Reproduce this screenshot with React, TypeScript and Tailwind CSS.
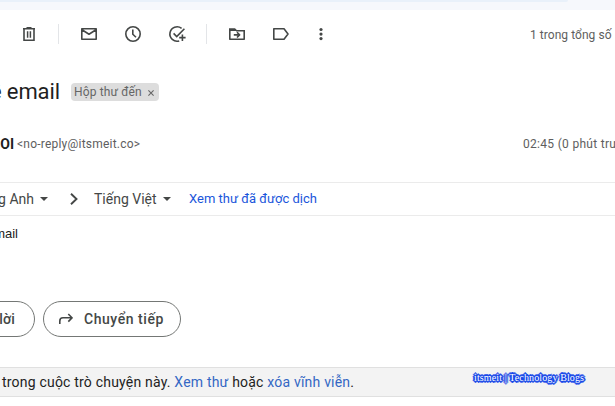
import React from 'react';

function Icon({ children, className = '' }: { children: React.ReactNode; className?: string }) {
  return (
    <svg viewBox="0 0 20 20" className={`h-5 w-5 shrink-0 ${className}`} fill="none" stroke="#444746" strokeWidth="1.6">
      {children}
    </svg>
  );
}

function Toolbar() {
  return (
    <div className="flex h-12 items-center pl-[19px] text-[12px] text-[#5e5e5e]">
      <Icon>
        <path d="M5 5.5V16.2H15V5.5M4 4.8H16M7.5 3.8H12.5" />
        <path d="M8.6 7.2V13.8M11.4 7.2V13.8" strokeWidth="1.5" />
      </Icon>
      <div className="ml-[19px] h-5 w-px bg-[#e3e5e8]" />
      <Icon className="ml-5">
        <path d="M2.8 4.8H17.2V15.2H2.8ZM3 5.8L10 10.2L17 5.8" strokeLinejoin="round" />
      </Icon>
      <Icon className="ml-6">
        <circle cx="10" cy="10" r="7.2" />
        <path d="M9.8 5.5V10.2L13 13.3" />
      </Icon>
      <Icon className="ml-6">
        <path d="M14.6 4.4A7.2 7.2 0 1 0 12.2 16.9M6.6 9.4L9.7 12.5L17.4 4.7M15.4 10.4V17M12.2 13.6H18.6" />
      </Icon>
      <div className="ml-[19px] h-5 w-px bg-[#e3e5e8]" />
      <Icon className="ml-5">
        <path d="M2 4.2H8L9.8 6H18V7H2Z" fill="#444746" stroke="none" />
        <path d="M2.8 5V15.2H17.2V6.8H9M6.8 10.9H12.2M10 8.3L12.6 10.9L10 13.5" strokeLinejoin="round" />
      </Icon>
      <Icon className="ml-6">
        <path d="M2.8 4.8H13L17 10L13 15.2H2.8Z" strokeLinejoin="round" />
      </Icon>
      <Icon className="ml-5">
        <g fill="#444746" stroke="none">
          <circle cx="10" cy="5.5" r="1.6" />
          <circle cx="10" cy="10.1" r="1.6" />
          <circle cx="10" cy="14.6" r="1.6" />
        </g>
      </Icon>
      <span className="ml-[199px] pt-px text-[12px] tracking-[0.05px]">1 trong tổng số</span>
    </div>
  );
}

function Caret() {
  return (
    <svg viewBox="0 0 8 4" className="h-1 w-2 shrink-0" fill="#444746">
      <path d="M0 0H8L4 4Z" />
    </svg>
  );
}

export default function App() {
  return (
    <div className="h-[406px] w-[615px] overflow-hidden whitespace-nowrap bg-white font-['Roboto','Noto_Sans',sans-serif] text-[#444746]">
      <div className="h-[10px] bg-[#f6f8fc]">
        <div className="h-[2px] w-[568px] rounded-br-[12px] bg-[#e9f1fa]" />
      </div>
      <Toolbar />
      <div className="flex h-[68px] items-center">
        <h1 className="flex w-[60px] justify-end overflow-hidden text-[22px] font-normal leading-8 tracking-[-0.1px] text-[#1f1f1f]">
          <span className="shrink-0">ề email</span>
        </h1>
        <div className="ml-[11px] flex h-[18px] w-[88px] items-center justify-between rounded-[4px] bg-[#ddd] pl-[3px] pr-[5px] text-[12px] text-[#666]">
          <span className="tracking-[0.15px]">Hộp thư đến</span>
          <svg viewBox="0 0 6 6" className="mt-px h-[6px] w-[6px]" stroke="#666" strokeWidth="1.1">
            <path d="M.4 .4L5.6 5.6M5.6 .4L.4 5.6" />
          </svg>
        </div>
      </div>
      <div className="flex h-[56px] items-start pt-2 text-[12px] leading-5 text-[#5e5e5e]">
        <span className="flex w-[14px] shrink-0 justify-end overflow-hidden text-[14px] font-bold text-[#1f1f1f]">OI</span>
        <span className="ml-[3px] w-[506px] shrink-0 tracking-[0.22px]">&lt;no-reply@itsmeit.co&gt;</span>
        <span className="shrink-0 tracking-[0.3px]">02:45 (0 phút trước)</span>
      </div>
      <div className="flex h-[34px] items-center border-y border-[#ebebeb] text-[14px]">
        <span className="flex w-[34px] justify-end overflow-hidden leading-6">
          <span className="shrink-0">ng Anh</span>
        </span>
        <span className="ml-[6px] flex"><Caret /></span>
        <svg viewBox="0 0 8 12" className="ml-[22px] h-3 w-2" fill="none" stroke="#444746" strokeWidth="1.9">
          <path d="M1 .8L6.5 6L1 11.2" />
        </svg>
        <span className="ml-4 w-[63px]">Tiếng Việt</span>
        <span className="ml-[6px] flex"><Caret /></span>
        <a className="ml-[18px] text-[13px] text-[#1a56db]">Xem thư đã được dịch</a>
      </div>
      <div className="h-[85px] pt-2 font-['Liberation_Sans',sans-serif] text-[13px] leading-5 text-[#222]">
        <div className="flex w-[18px] justify-end overflow-hidden">
          <span className="shrink-0">email</span>
        </div>
      </div>
      <div className="flex h-[66px] items-start text-[14px] font-medium">
        <div className="-ml-[60px] flex h-9 w-[95px] items-center justify-end rounded-full border border-[#747775] pr-[19px]">
          <span className="tracking-[0.2px]">Trả lời</span>
        </div>
        <div className="ml-2 flex h-9 w-[138px] items-center rounded-full border border-[#747775] pl-[15px]">
          <svg viewBox="0 0 14 12" className="h-3 w-[14px]" fill="none" stroke="#444746" strokeWidth="1.6">
            <path d="M.8 11V8Q.8 4.8 4 4.8H13M9.3 1L13 4.8L9.3 8.6" />
          </svg>
          <span className="ml-[11px] tracking-[0.55px]">Chuyển tiếp</span>
        </div>
      </div>
      <div className="flex h-[30px] items-center border-y border-[#e0e0e0] bg-[#f3f3f3] pl-[2px] text-[14px] text-[#222]">
        <p className="w-[472px] shrink-0 tracking-[0.2px]">
          trong cuộc trò chuyện này. <a className="text-[#3367c4]">Xem thư</a> hoặc{' '}
          <a className="text-[#3367c4]">xóa vĩnh viễn</a>.
        </p>
        <span className="-mt-[9px] font-['Liberation_Serif',serif] text-[10px] tracking-[0.12px] text-white [text-shadow:1px_0_#1748e8,-1px_0_#1748e8,0_1px_#1748e8,0_-1px_#1748e8,1px_1px_#1748e8,-1px_-1px_#1748e8,1px_-1px_#1748e8,-1px_1px_#1748e8,0_2px_#1748e8,0_-2px_#1748e8,2px_0_#1748e8,-2px_0_#1748e8,0_0_2px_#1748e8,0_0_2px_#1748e8]">
          itsmeit | Technology Blogs
        </span>
      </div>
    </div>
  );
}
